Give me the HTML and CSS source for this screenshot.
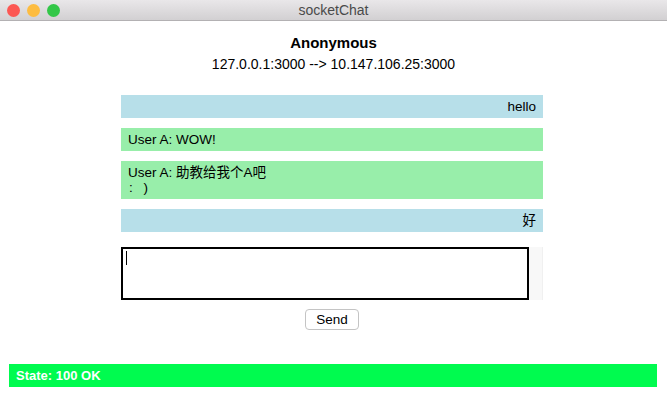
FILE: index.html
```html
<!DOCTYPE html>
<html>
<head>
<meta charset="utf-8">
<link rel="stylesheet" href="styles.css">
</head>
<body>
<div class="titlebar">
  <div class="lights">
    <span class="light red"></span>
    <span class="light yellow"></span>
    <span class="light green"></span>
  </div>
  <div class="wintitle">socketChat</div>
</div>
<main class="page">
  <h1 class="name">Anonymous</h1>
  <div class="addr">127.0.0.1:3000 --&gt; 10.147.106.25:3000</div>
  <div class="chat">
    <div class="msg mine">hello</div>
    <div class="msg theirs">User A: WOW!</div>
    <div class="msg theirs">User A: 助教给我个A吧<br><span class="smiley">: )</span></div>
    <div class="msg mine">好</div>
    <div class="inputrow">
      <div class="input"><span class="caret"></span></div>
      <div class="gutter"></div>
    </div>
    <div class="btnrow"><button class="send">Send</button></div>
  </div>
</main>
<div class="state">State: 100 OK</div>
</body>
</html>
```
FILE: styles.css
```css
html, body {
  margin: 0;
  padding: 0;
  background: #fff;
  font-family: "Liberation Sans", "Noto Sans CJK SC", sans-serif;
  color: #000;
}
.titlebar {
  height: 20px;
  border-bottom: 1px solid #b3b1b3;
  background: linear-gradient(#e9e7e9, #d2d0d2);
  display: flex;
  align-items: center;
  justify-content: center;
  position: relative;
}
.lights {
  position: absolute;
  left: 7px;
  top: 4px;
  display: flex;
  gap: 7px;
}
.light {
  width: 13px;
  height: 13px;
  border-radius: 50%;
  display: block;
}
.red { background: #fc5753; }
.yellow { background: #fdbc40; }
.green { background: #33c748; }
.wintitle {
  font-size: 14px;
  color: #4a4a4a;
  line-height: 20px;
}
.page {
  display: flex;
  flex-direction: column;
  align-items: center;
}
.name {
  margin: 13px 0 0;
  font-size: 15px;
  line-height: 18px;
  font-weight: bold;
}
.addr {
  margin-top: 4px;
  font-size: 14px;
  line-height: 17px;
}
.chat {
  width: 422px;
  margin-top: 22px;
  margin-left: -3px;
  display: flex;
  flex-direction: column;
}
.msg {
  font-size: 13.5px;
  line-height: 15px;
  height: 15px;
  padding: 4px 7px;
  margin-bottom: 10px;
}
.msg.theirs:nth-child(3) {
  height: 30px;
}
.smiley {
  word-spacing: 7px;
  padding-left: 1px;
}
.mine {
  background: #b7dfe9;
  text-align: right;
}
.theirs {
  background: #98eeaa;
}
.inputrow {
  display: flex;
  margin-top: 5px;
  height: 53px;
}
.input {
  width: 408px;
  border: 2px solid #000;
  background: #fff;
  padding: 2px 2px;
  box-sizing: border-box;
}
.caret {
  display: block;
  width: 1px;
  height: 14px;
  background: #000;
  margin-left: 1px;
}
.gutter {
  flex: 1;
  background: #f8f8f8;
  border-right: 1px solid #f0f0f0;
}
.btnrow {
  display: flex;
  justify-content: center;
  margin-top: 9px;
}
.send {
  width: 54px;
  height: 21px;
  font-family: "Liberation Sans", sans-serif;
  font-size: 13.5px;
  color: #000;
  background: #fff;
  border: 1px solid #c4c4c4;
  border-radius: 4px;
  padding: 0;
}
.state {
  margin: 34px 10px 0 9px;
  height: 23px;
  background: #00fb4f;
  color: #fff;
  font-size: 13px;
  font-weight: bold;
  line-height: 23px;
  padding-left: 7px;
}
```
